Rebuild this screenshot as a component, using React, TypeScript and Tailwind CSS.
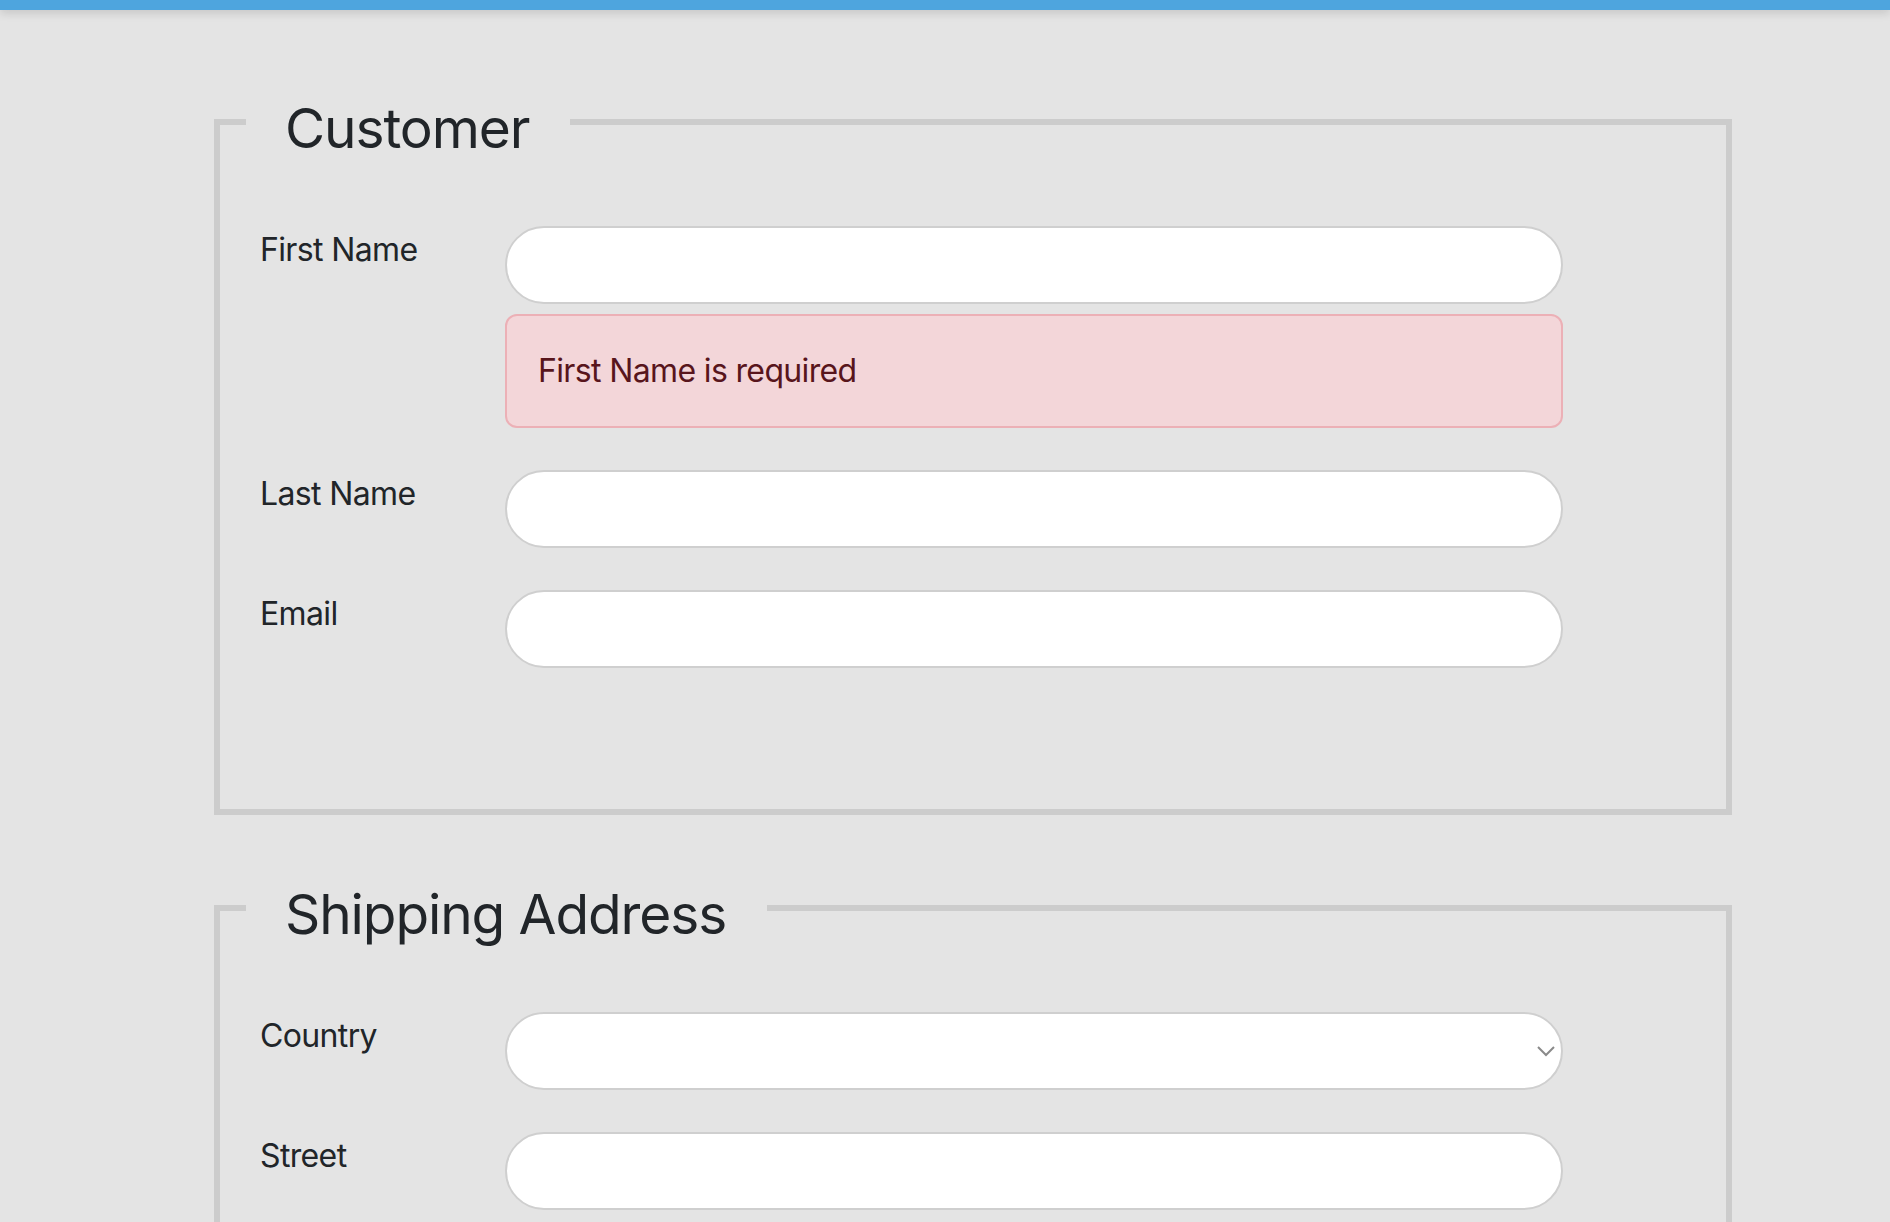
const customerFields = [
  { label: 'First Name', error: 'First Name is required' },
  { label: 'Last Name' },
  { label: 'Email' },
]

function Field({ label, error, select }: { label: string; error?: string; select?: boolean }) {
  return (
    <div className="flex">
      <label className="w-[245px] shrink-0 text-[32px] leading-[48px] tracking-[-0.02em] text-[#212529]">{label}</label>
      <div className="w-[1058px]">
        {select ? (
          <div className="relative">
            <select className="block h-[78px] w-full appearance-none rounded-full border-2 border-[#cfcfcf] bg-white px-6 text-[32px] outline-none">
              <option value=""></option>
            </select>
            <svg
              className="pointer-events-none absolute right-[8px] top-[34px]"
              width="18"
              height="11"
              viewBox="0 0 18 11"
              fill="none"
            >
              <path d="M1 1l8 8 8-8" stroke="#8a8a8a" strokeWidth="2" />
            </svg>
          </div>
        ) : (
          <input
            type="text"
            className="block h-[78px] w-full rounded-full border-2 border-[#cfcfcf] bg-white px-6 text-[32px] outline-none"
          />
        )}
        {error && (
          <div className="mt-[10px] rounded-[12px] border-2 border-[#ecb0b6] bg-[#f3d6d9] py-[32px] pl-[31px] pr-[32px] text-[32px] leading-[46px] tracking-[-0.02em] text-[#58151c]">
            {error}
          </div>
        )}
      </div>
    </div>
  )
}

function Section({ title, children, className }: { title: string; children: React.ReactNode; className?: string }) {
  return (
    <fieldset className={`w-[1518px] border-[6px] border-[#cccccc] pb-[141px] ${className ?? ''}`}>
      <legend className="ml-[26px] pl-[39px] pr-[41px] pt-[12px] text-[55px] leading-[66px] tracking-[-0.02em] text-[#212529]">
        {title}
      </legend>
      <div className="flex flex-col gap-[42px] pl-[40px] pt-[65px]">{children}</div>
    </fieldset>
  )
}

export default function App() {
  return (
    <div className="h-screen overflow-hidden bg-[#e4e4e4] font-[family-name:Inter]">
      <div className="h-[10px] bg-[#4ea5de] shadow-[0_3px_10px_rgba(0,0,0,0.14)]" />
      <div className="ml-[214px] pt-[73px]">
        <Section title="Customer">
          {customerFields.map((f) => (
            <Field key={f.label} label={f.label} error={f.error} />
          ))}
        </Section>
        <Section title="Shipping Address" className="mt-[54px]">
          <Field label="Country" select />
          <Field label="Street" />
        </Section>
      </div>
    </div>
  )
}
